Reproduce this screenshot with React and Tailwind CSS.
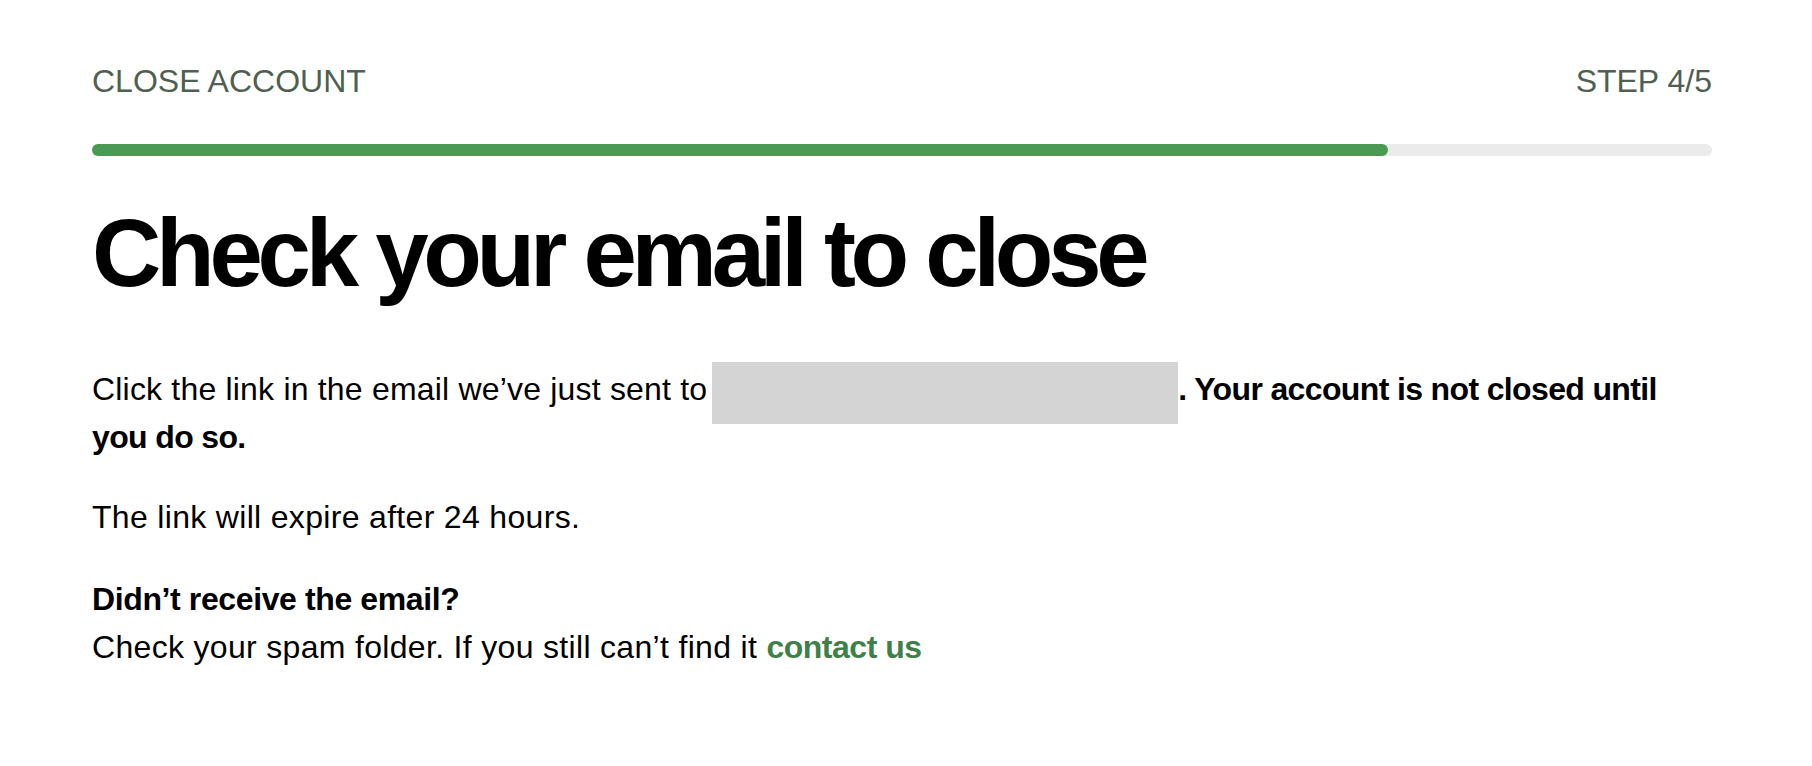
export default function App() {
  return (
    <div className="min-h-[766px] bg-white pl-[92px] pr-[100px] pt-[61px] font-['Liberation_Sans','Arial',sans-serif] text-black">
      <div className="flex items-center justify-between text-[32px] leading-[40px] text-[#4f5f50]">
        <span>CLOSE ACCOUNT</span>
        <span>STEP 4/5</span>
      </div>
      <div className="mt-[43px] h-[12px] w-full rounded-full bg-[#ebebeb]">
        <div className="h-full w-[80%] rounded-full bg-[#4a9a53]" />
      </div>
      <h1 className="mt-[49px] text-[96px] leading-[96px] font-bold tracking-[-0.055em]">
        Check your email to close
      </h1>
      <p className="mt-[64px] text-[32px] leading-[48px]">
        <span className="tracking-[0.006em]">Click the link in the email we’ve just sent to</span>
        <span className="relative ml-[5px] inline-block h-[48px] w-[466px] align-top">
          <span className="absolute left-0 right-0 top-[-3px] h-[62px] bg-[#d4d4d4]" />
        </span>
        <span className="font-bold tracking-[-0.02em]">. Your account is not closed until you do so.</span>
      </p>
      <p className="mt-[32px] text-[32px] leading-[48px] tracking-[0.01em]">
        The link will expire after 24 hours.
      </p>
      <div className="mt-[34px] text-[32px] leading-[48px] tracking-[0.01em]">
        <p className="font-bold tracking-[-0.012em]">Didn’t receive the email?</p>
        <p>
          Check your spam folder. If you still can’t find it{" "}
          <a href="#" className="font-bold tracking-[-0.015em] text-[#3f7f48]">contact us</a>
        </p>
      </div>
    </div>
  );
}
